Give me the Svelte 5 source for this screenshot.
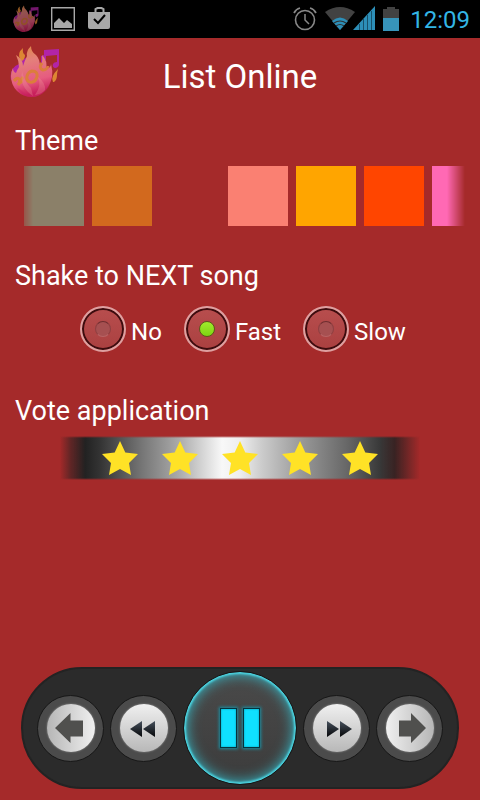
<script lang="ts">
  const themes = [
    { name: 'Stone', color: '#8b8069' },
    { name: 'Chocolate', color: '#d2691e' },
    { name: 'Brown', color: '#a52a2a' },
    { name: 'Salmon', color: '#fa8072' },
    { name: 'Orange', color: '#ffa500' },
    { name: 'Orange red', color: '#ff4500' },
    { name: 'Hot pink', color: '#ff69b4' },
  ];
  const speeds = ['No', 'Fast', 'Slow'];

  let background = $state('#a52a2a');
  let shake = $state('Fast');
  let rating = $state(5);
  let playing = $state(true);
</script>

{#snippet logo(id: string)}
  <svg class="logo" viewBox="0 0 50 52" aria-hidden="true">
    <defs>
      <linearGradient id="{id}-body" x1="0" y1="0" x2="0.2" y2="1">
        <stop offset="0" stop-color="#dd8b3c" />
        <stop offset="0.35" stop-color="#e4807a" />
        <stop offset="0.75" stop-color="#e65c80" />
        <stop offset="1" stop-color="#c8205c" />
      </linearGradient>
    </defs>
    <path fill="#b224a8" d="M34 4 49 3V19q-1 3-4 3-3-1-2-4 1-2 4-2V9L36 10V14l-5 3V10l3-1z" />
    <path fill="#b224a8" d="M11 14 16 12V20L8 32 1 34Q-1 22 9 18zM29 17l7 3-3 10-6-5z" />
    <path fill="#dd8733" d="M10 13Q7 7 13 2q-1 5 2 7 0 4-3 6zM43 36q-3-5 5-13-1 4-1 6 0 5-3 7z" />
    <path
      fill="url(#{id}-body)"
      d="M22 51Q13 51 7 45 1 39 1 30q0-4 2-8 0 4 3 5 1-3 3-6 0-6-3-12 7 4 7 11 2-6 4-10-1-5 4-10 0 6 5 9 4 4 4 12 3-4 2-12 6 6 4 14 5-1 5-5 2 7 1 13-2 9-7 14-6 6-13 6z"
    />
    <path
      fill="none"
      stroke="#dc7d3c"
      stroke-width="3"
      d="M4 35Q7 31 9 33T8 39M13 31q-3 4-1 6M22 25q6 0 5 6-2 6-7 5-4-1-3-6 1-4 5-5zM32 17q-4 5 1 7 4 0 5-4"
    />
    <path fill="#f09a9a" opacity="0.3" d="M23 50Q9 41 12 25q3 12 9 17zM25 49q7-10 3-18 8 6 7 13-3 4-10 5z" />
    <path fill="#ca1c60" opacity="0.35" d="M7 42q6 2 9 8Q10 48 7 42zM27 50q9-3 13-13-2 10-13 13z" />
  </svg>
{/snippet}

<div class="app" style:background-color={background}>
  <div class="status">
    <div class="status__group status__group--left">
      {@render logo('notice')}
      <svg width="24" height="24" viewBox="0 0 24 24" aria-hidden="true">
        <path fill="none" stroke="#a8a8a8" d="M.7.7h22.6v22.6H.7z" stroke-width="1.4" />
        <path fill="#a8a8a8" d="M3 21v-5l5-5 5 5 3-3 5 4v4z" />
      </svg>
      <svg width="24" height="24" viewBox="0 0 24 24" aria-hidden="true">
        <path fill="none" stroke="#a8a8a8" stroke-width="2" d="M8.500 5V2l2-1h4l2 1v3" />
        <path fill="#a8a8a8" d="M1 5h22v15q0 2-2 2H3q-2 0-2-2z" />
        <path fill="none" stroke="#000" stroke-width="2" d="m7 12 4 4 7-8" />
      </svg>
    </div>
    <div class="status__group status__group--right">
      <svg width="24" height="24" viewBox="0 0 24 24" aria-hidden="true">
        <g fill="none" stroke="#888">
          <circle cx="12" cy="13" r="9.500" stroke-width="1.600" />
          <path stroke-width="1.500" d="M12 7v6l4 4" />
          <path stroke-width="1.800" d="M1 6Q3 2 7 1M23 6Q21 2 17 1" />
        </g>
      </svg>
      <svg width="50" height="26" viewBox="0 0 50 26" aria-hidden="true">
        <path fill="#424242" d="M0 6Q15-4 30 6L15 24z" />
        <path fill="#2d8fb8" d="M7 15q8-7 16 0l-8 9z" />
        <path fill="none" stroke="#303030" stroke-width="1.200" d="M9 17q6-4 12 0M11 20q4-3 8 0" />
        <path fill="#2d8fb8" d="M28 24 50 0V24z" />
        <path stroke="#17506a" d="M34.500 18v6M38.500 13v11M42.500 9v15M46.500 5v19" />
      </svg>
      <svg width="16" height="24" viewBox="0 0 16 24" aria-hidden="true">
        <path fill="#424242" d="M0 2h4V0h8v2h4v10H0z" />
        <path fill="#3794ba" d="M0 11h16v13H0z" />
      </svg>
      <time>12:09</time>
    </div>
  </div>

  <header>
    {@render logo('brand')}
    <h1>List Online</h1>
  </header>

  <main>
    <section>
      <h2>Theme</h2>
      <div class="themes">
        {#each themes as theme}
          <button
            type="button"
            class="swatch"
            aria-label={theme.name}
            style:background-color={theme.color}
            onclick={() => (background = theme.color)}
          ></button>
        {/each}
      </div>
    </section>

    <section>
      <h2 id="shake-title">Shake to NEXT song</h2>
      <div class="speeds" role="radiogroup" aria-labelledby="shake-title">
        {#each speeds as speed}
          <label>
            <input type="radio" name="shake" value={speed} bind:group={shake} />
            <span>{speed}</span>
          </label>
        {/each}
      </div>
    </section>

    <section>
      <h2>Vote application</h2>
      <div class="rating">
        {#each [1, 2, 3, 4, 5] as value}
          <button type="button" aria-label="Rate {value}" onclick={() => (rating = value)}>
            <svg class={['star', value > rating && 'is-off']} viewBox="0 0 36 34" aria-hidden="true">
              <path d="M18 0 23.300 11.500 36 13 27 22 29 34 18 28 7 34 9 22 0 13 12.700 11.500z" />
            </svg>
          </button>
        {/each}
      </div>
    </section>
  </main>

  <footer class="player">
    <button type="button" class="key" aria-label="Back">
      <span class="cap cap--back">
        <svg viewBox="0 0 48 48" aria-hidden="true">
          <path fill="#50504e" d="M8 24 23.500 9v7.500H36v16H23.500V39z" />
        </svg>
      </span>
    </button>
    <button type="button" class="key" aria-label="Previous song">
      <span class="cap">
        <svg viewBox="0 0 48 48" aria-hidden="true">
          <defs>
            <linearGradient id="skip" x1="0" y1="0" x2="0" y2="1">
              <stop offset="0" stop-color="#46505c" />
              <stop offset="1" stop-color="#050608" />
            </linearGradient>
          </defs>
          <path fill="url(#skip)" d="M10 25 22 17v16zM23 25 35 17v16z" />
        </svg>
      </span>
    </button>
    <button
      type="button"
      class="play"
      aria-label={playing ? 'Pause' : 'Play'}
      onclick={() => (playing = !playing)}
    >
      {#if playing}
        <span class="bar"></span>
        <span class="bar"></span>
      {:else}
        <svg width="42" height="42" viewBox="0 0 42 42" aria-hidden="true">
          <path fill="#0fe0ff" d="M8 2 38 21 8 40z" />
        </svg>
      {/if}
    </button>
    <button type="button" class="key" aria-label="Next song">
      <span class="cap">
        <svg viewBox="0 0 48 48" aria-hidden="true">
          <path fill="url(#skip)" d="M14 17 26 25 14 33zM27 17 39 25 27 33z" />
        </svg>
      </span>
    </button>
    <button type="button" class="key" aria-label="Forward">
      <span class="cap cap--forward">
        <svg viewBox="0 0 48 48" aria-hidden="true">
          <path fill="#50504e" d="M40 24 25 9v7.500H13v16h12V39z" />
        </svg>
      </span>
    </button>
  </footer>
</div>

<style>
  :global(body) {
    margin: 0;
  }

  .app {
    display: flex;
    flex-direction: column;
    min-height: 100vh;
    color: #fff;
    font-family: Roboto, sans-serif;
  }

  button {
    padding: 0;
    border: 0;
    background: none;
    cursor: pointer;
  }

  svg {
    display: block;
  }

  .status {
    display: flex;
    justify-content: space-between;
    height: 38px;
    padding: 0 10px 0 13px;
    background: #000;
  }

  .status__group {
    display: flex;
    align-items: center;
  }

  .status__group--left {
    gap: 12px;
  }

  .status__group--right {
    gap: 8px;
  }

  .status .logo {
    width: 26px;
    height: 28px;
    opacity: 0.65;
  }

  time {
    padding-top: 2px;
    margin-left: 3px;
    color: #33b5e5;
    font-size: 24px;
  }

  header {
    display: grid;
    grid-template-columns: 50px 1fr 50px;
    align-items: start;
    height: 76px;
    padding: 8px 10px 0;
    box-sizing: border-box;
  }

  header .logo {
    width: 50px;
    height: 52px;
  }

  h1 {
    margin: 11px 0 0;
    font-size: 33px;
    font-weight: 400;
    line-height: 40px;
    text-align: center;
  }

  main {
    flex: 1;
    padding: 8px 15px 0;
  }

  section {
    min-height: 135px;
  }

  h2 {
    margin: 0 0 6px;
    font-size: 27px;
    font-weight: 400;
    line-height: 38px;
  }

  .themes {
    display: flex;
    gap: 8px;
    padding-left: 9px;
    overflow: hidden;
    mask-image: linear-gradient(to right, transparent, #000 18px calc(100% - 18px), transparent);
  }

  .swatch {
    flex: none;
    width: 60px;
    height: 60px;
  }

  .speeds {
    display: flex;
    justify-content: center;
    gap: 22px;
    padding: 5px 0 0 6px;
  }

  label {
    display: flex;
    align-items: center;
    gap: 5px;
    font-size: 24px;
    line-height: 28px;
    cursor: pointer;
  }

  label span {
    padding-top: 6px;
  }

  input {
    display: grid;
    place-items: center;
    width: 46px;
    height: 46px;
    margin: 0;
    border: 2px solid #dea0a0;
    border-radius: 50%;
    background: linear-gradient(#b84e4e, #aa4040);
    box-shadow: inset 0 0 0 2px #3c0c0e;
    appearance: none;
    cursor: pointer;
  }

  input::before {
    content: '';
    width: 14px;
    height: 14px;
    border: 1px solid #8e3f41;
    border-top-color: #6e2e30;
    border-bottom-color: #b86465;
    border-radius: 50%;
    background: #a65051;
  }

  input:checked::before {
    border-color: #5a5a18;
    background: linear-gradient(#a0ec2c, #7ed412);
  }

  .rating {
    display: flex;
    justify-content: center;
    width: 360px;
    max-width: 100%;
    margin: 0 auto;
    background: linear-gradient(
      to right,
      transparent,
      #2228 3%,
      #222 7%,
      #333 11%,
      #777 23%,
      #aaa 33%,
      #f8f8f8 45%,
      #eee 50%,
      #ccc 56%,
      #999 67%,
      #666 80%,
      #383838 89%,
      #2a2222e0 93%,
      #2a222200 100%
    );
    mask-image: linear-gradient(transparent, #000 2px calc(100% - 2px), transparent);
  }

  .rating button {
    display: grid;
    place-items: center;
    width: 60px;
    height: 44px;
  }

  .star {
    width: 36px;
    height: 34px;
    fill: #ffe226;
  }

  .star.is-off {
    fill: #777;
  }

  .player {
    display: flex;
    align-items: center;
    justify-content: center;
    gap: 6px;
    height: 122px;
    margin: 0 21px 11px;
    border: 2px solid #232323;
    border-radius: 61px;
    box-sizing: border-box;
    background: #2b2b2b;
  }

  .key {
    display: grid;
    flex: none;
    place-items: center;
    width: 67px;
    height: 67px;
    border: 1px solid #171717;
    border-radius: 50%;
    background: #4b4b4b;
  }

  .cap {
    width: 48px;
    height: 48px;
    border-radius: 50%;
    background: linear-gradient(#f0f0f0, #b8b8b8);
    box-shadow: 0 0 2px #999;
  }

  .cap--back {
    background: linear-gradient(to right, #b6b6b6, #f0f0f0);
  }

  .cap--forward {
    background: linear-gradient(to right, #f0f0f0, #b6b6b6);
  }

  .play {
    display: flex;
    flex: none;
    align-items: center;
    justify-content: center;
    gap: 6px;
    width: 114px;
    height: 114px;
    border: 1px solid #151515;
    border-radius: 50%;
    background: linear-gradient(#4a4a4a, #3c3c3c);
    box-shadow:
      inset 0 0 2px 2px #4bd3e0,
      inset 0 0 14px 2px #35bccb;
  }

  .bar {
    width: 17px;
    height: 40px;
    border: 1px solid #06323c;
    box-sizing: border-box;
    background: #0fe0ff;
    box-shadow:
      inset 0 0 2px #0790a8,
      0 0 3px 1px #1c8fa2;
  }
</style>
